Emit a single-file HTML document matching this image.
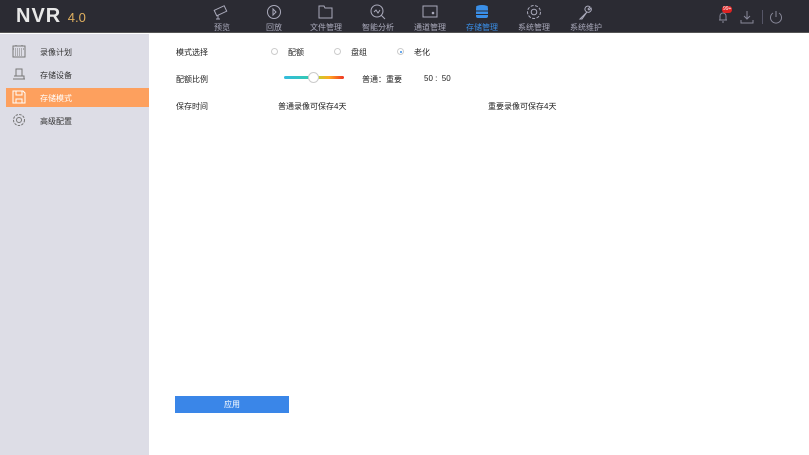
<!DOCTYPE html>
<html><head><meta charset="utf-8"><style>
*{margin:0;padding:0;box-sizing:border-box}
body{width:809px;height:455px;overflow:hidden;background:#fff;font-family:"Liberation Sans","Noto Sans CJK SC",sans-serif;font-size:8px;color:#333;position:relative}
.hd{position:absolute;left:0;top:0;width:809px;height:33px;background:#2b2b33;border-bottom:1px solid #555}
.logo{position:absolute;left:16px;top:5px;color:#e8e8e8;font-weight:bold;font-size:20px;letter-spacing:1px}
.logo span{color:#e0b060;font-weight:normal;font-size:13px;letter-spacing:0}
.nav{position:absolute;top:0;width:52px;text-align:center;color:#aab;font-size:8px}
.nav svg{position:absolute;left:17px;top:3px}
.nav div{position:absolute;top:22px;width:52px}
.side{position:absolute;left:0;top:34px;width:149px;height:421px;background:#dddde6}
.it{position:absolute;left:6px;width:143px;height:19px;font-size:8px;color:#333}
.it span{position:absolute;left:34px;top:5px}
.it svg{position:absolute;left:6px;top:2px}
.act{background:#fda05e;color:#fff}
.t{position:absolute;font-size:8px;color:#222}
.rd{position:absolute;width:7px;height:7px;border:1px solid #ccc;border-radius:50%}
</style></head><body>
<div class="hd">
<div class="logo">NVR <span>4.0</span></div>
<div class="nav" style="left:196px"><svg width="18" height="18" fill="none" stroke="#aab"><rect x="2" y="5" width="11" height="6" transform="rotate(-25 7 8)"/><path d="M3 16h4M5 12v4"/></svg><div>预览</div></div>
<div class="nav" style="left:248px"><svg width="18" height="18" fill="none" stroke="#aab"><circle cx="9" cy="9" r="6.5"/><path d="M8 6l3 3-3 3z"/></svg><div>回放</div></div>
<div class="nav" style="left:300px"><svg width="18" height="18" fill="none" stroke="#aab"><path d="M2 3h5l1 2h7v10H2z"/></svg><div>文件管理</div></div>
<div class="nav" style="left:352px"><svg width="18" height="18" fill="none" stroke="#aab"><circle cx="8" cy="8" r="6"/><path d="M5 9l2-2 2 3 2-3M12 12l4 4"/></svg><div>智能分析</div></div>
<div class="nav" style="left:404px"><svg width="18" height="18" fill="none" stroke="#aab"><rect x="2" y="3" width="14" height="11"/><circle cx="12" cy="10" r="0.8" fill="#aab"/></svg><div>通道管理</div></div>
<div class="nav" style="left:456px;color:#3a8fe8"><svg width="18" height="18" fill="#3a8fe8"><ellipse cx="9" cy="4" rx="6" ry="2"/><rect x="3" y="4" width="12" height="11" rx="2"/><path d="M3 8h12M3 11.5h12" stroke="#2b2b33"/></svg><div>存储管理</div></div>
<div class="nav" style="left:508px"><svg width="18" height="18" fill="none" stroke="#aab"><circle cx="9" cy="9" r="2.8"/><circle cx="9" cy="9" r="6.5" stroke-dasharray="3 1.5"/></svg><div>系统管理</div></div>
<div class="nav" style="left:560px"><svg width="18" height="18" fill="none" stroke="#aab"><path d="M3 16l7-7a3 3 0 1 1 3-5l-2 2 1 1 2-2a3 3 0 0 1-4 4l-5 7z"/></svg><div>系统维护</div></div>
<svg style="position:absolute;left:716px;top:9px" width="14" height="14" fill="none" stroke="#889"><path d="M3 11h8M4 11V7a3 3 0 0 1 6 0v4M6 13h2"/></svg>
<div style="position:absolute;left:722px;top:6px;background:#d22;color:#fff;font-size:5px;border-radius:3px;padding:0 1px;line-height:7px">99+</div>
<svg style="position:absolute;left:740px;top:10px" width="14" height="14" fill="none" stroke="#889"><path d="M7 1v8M4 6l3 3 3-3M1 10v3h12v-3"/></svg>
<div style="position:absolute;left:762px;top:10px;width:1px;height:14px;background:#556"></div>
<svg style="position:absolute;left:768px;top:9px" width="16" height="16" fill="none" stroke="#889"><path d="M5 4a5.5 5.5 0 1 0 6 0M8 2v6"/></svg>
</div>
<div class="side">
<div class="it" style="top:8px"><svg width="14" height="14" fill="none" stroke="#777"><rect x="1" y="2" width="12" height="11"/><path d="M1 5h12M4 1v2M10 1v2M3 7h8M3 9h8M3 11h8" stroke-dasharray="1 1"/></svg><span>录像计划</span></div>
<div class="it" style="top:31px"><svg width="14" height="14" fill="none" stroke="#777"><path d="M4 2h6v7H4zM1 12h12M2 9h10v3"/></svg><span>存储设备</span></div>
<div class="it act" style="top:54px"><svg width="14" height="14" fill="none" stroke="#fff"><path d="M1 1h10l2 2v10H1zM4 1v4h6V1M4 13V9h6v4"/></svg><span>存储模式</span></div>
<div class="it" style="top:77px"><svg width="14" height="14" fill="none" stroke="#777"><circle cx="7" cy="7" r="2.5"/><circle cx="7" cy="7" r="5.5" stroke-dasharray="2.5 1.2"/></svg><span>高级配置</span></div>
</div>
<div class="t" style="left:176px;top:47px">模式选择</div>
<div class="rd" style="left:271px;top:48px"></div><div class="t" style="left:288px;top:47px">配额</div>
<div class="rd" style="left:334px;top:48px"></div><div class="t" style="left:351px;top:47px">盘组</div>
<div class="rd" style="left:397px;top:48px"></div><div style="position:absolute;left:399.5px;top:50.5px;width:2px;height:2px;background:#3a8fe8;border-radius:50%"></div><div class="t" style="left:414px;top:47px">老化</div>
<div class="t" style="left:176px;top:74px">配额比例</div>
<div style="position:absolute;left:284px;top:76px;width:30px;height:3px;background:linear-gradient(90deg,#33bbdd,#33ccaa);border-radius:2px"></div>
<div style="position:absolute;left:314px;top:76px;width:30px;height:3px;background:linear-gradient(90deg,#aadd33,#ffaa22,#ee3322);border-radius:2px"></div>
<div style="position:absolute;left:308px;top:72px;width:11px;height:11px;background:#fff;border:1px solid #ccc;border-radius:50%"></div>
<div class="t" style="left:362px;top:74px">普通：重要</div>
<div class="t" style="left:424px;top:74px">50 :&nbsp; 50</div>
<div class="t" style="left:176px;top:101px">保存时间</div>
<div class="t" style="left:278px;top:101px">普通录像可保存4天</div>
<div class="t" style="left:488px;top:101px">重要录像可保存4天</div>
<div style="position:absolute;left:175px;top:396px;width:114px;height:17px;background:#3a86e8;color:#fff;text-align:center;line-height:17px;font-size:8px">应用</div>
</body></html>
